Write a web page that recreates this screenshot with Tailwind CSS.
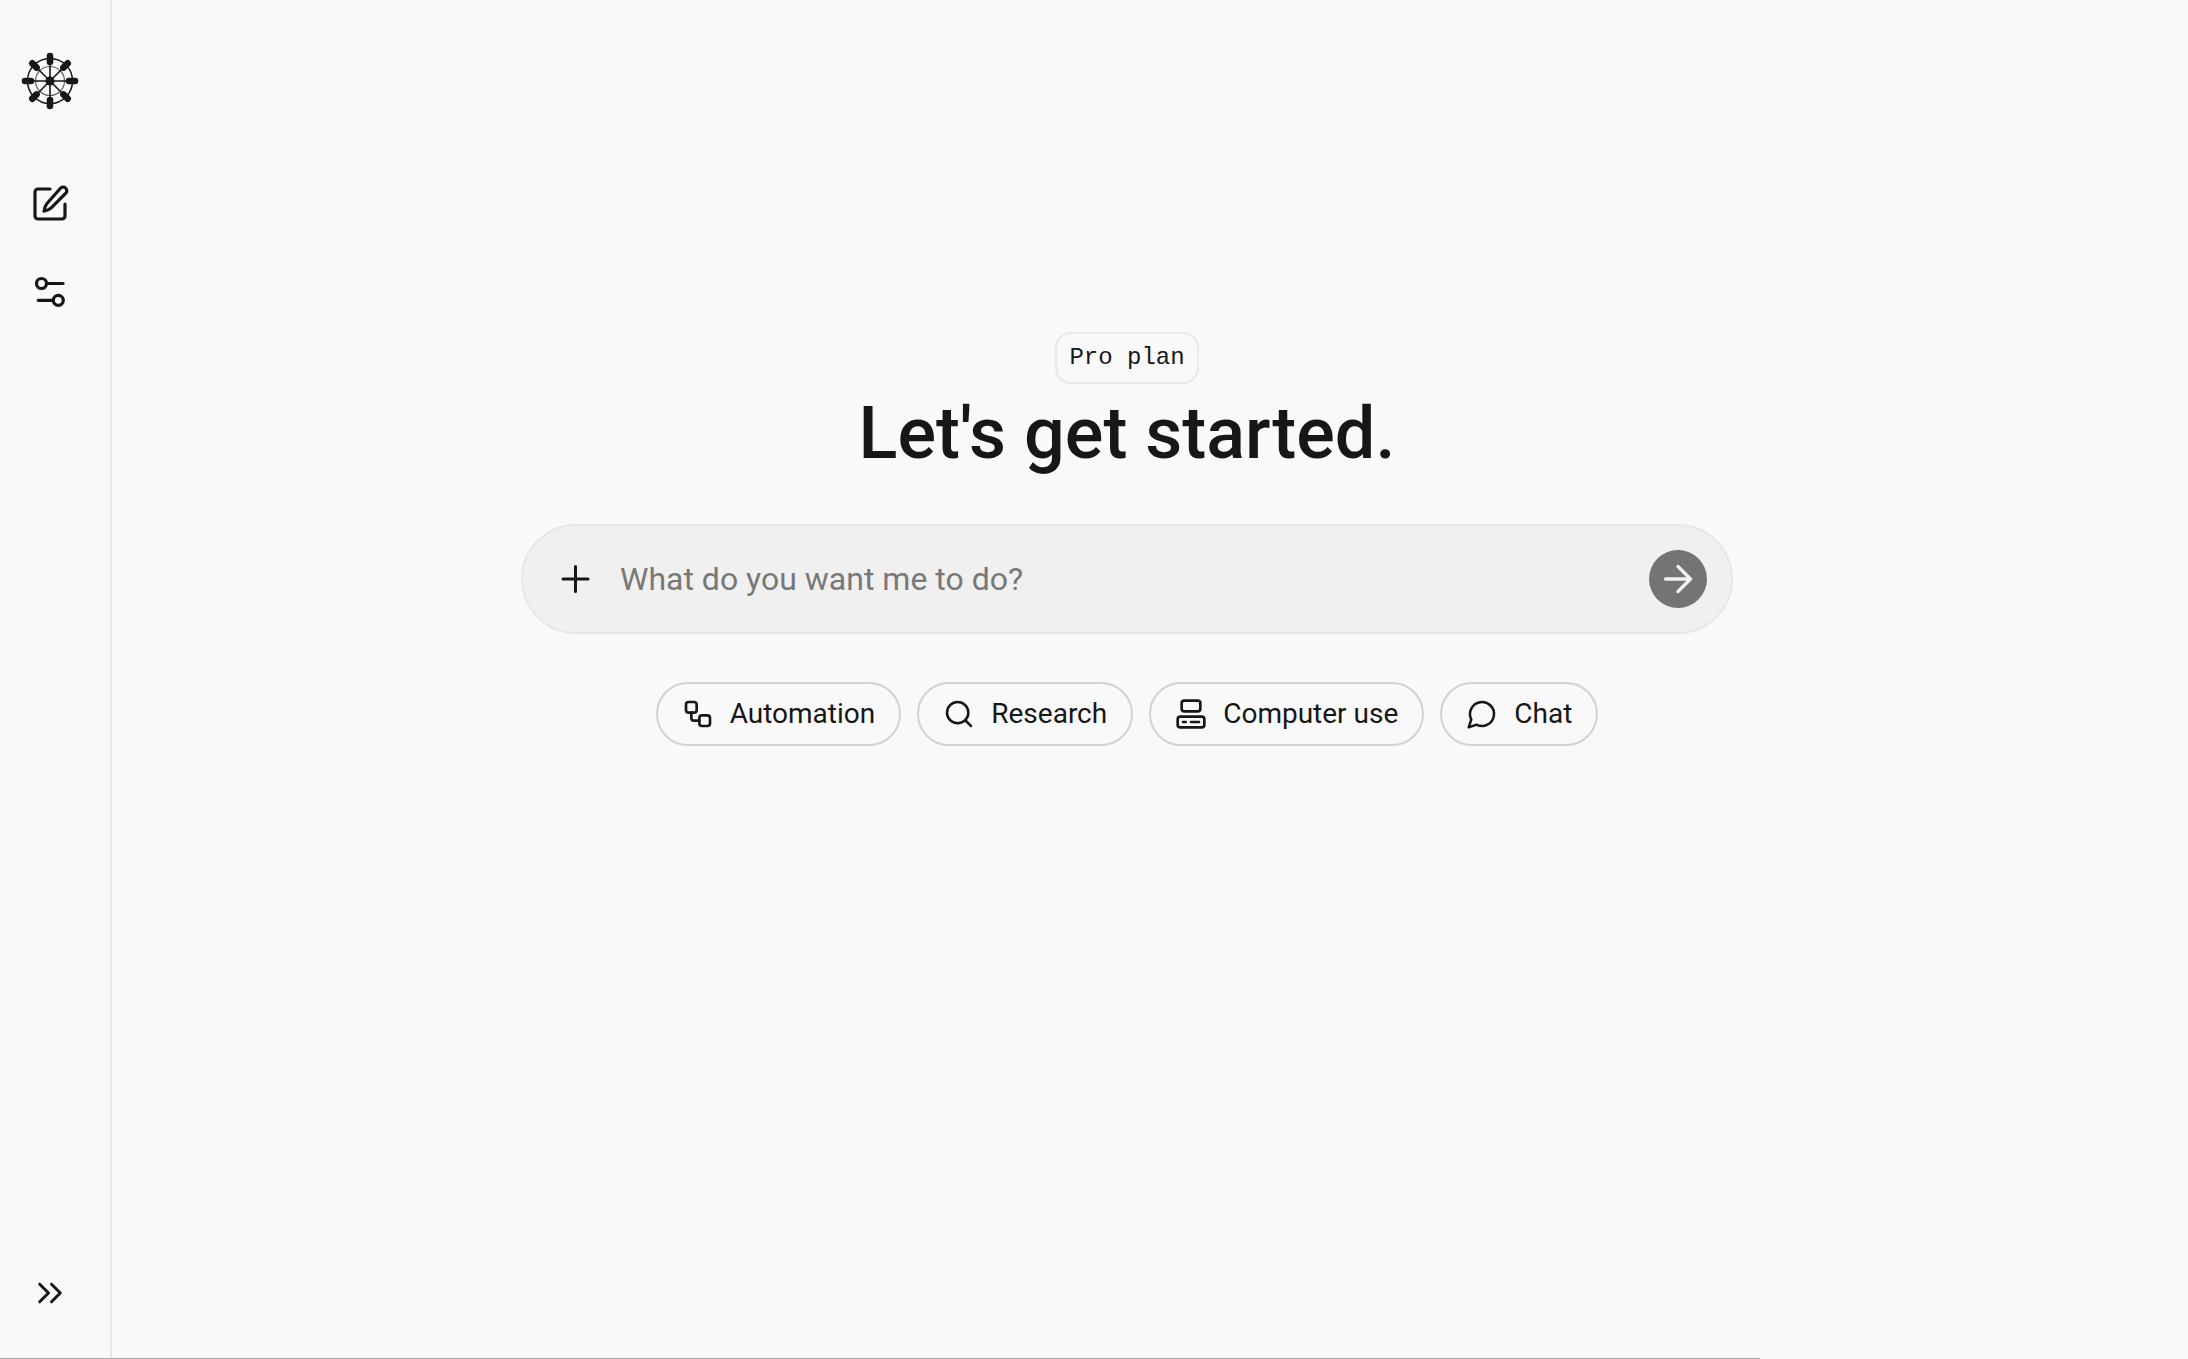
<!DOCTYPE html>
<html lang="en">
<head>
<meta charset="utf-8">
<meta name="viewport" content="width=device-width, initial-scale=1">
<title>Let's get started</title>
<script src="https://cdn.jsdelivr.net/npm/@tailwindcss/browser@4"></script>
</head>
<body class="flex min-h-screen flex-col bg-[#f9f9f9] font-['Roboto',sans-serif] text-[#171717]">
<div class="flex grow">
  <aside class="flex w-28 shrink-0 flex-col items-center border-r-2 border-[#e9e9e9] pt-[51px] pr-[10px] pb-[45px]">
    <a href="#" aria-label="Home" class="block">
      <svg class="size-[60px]" viewBox="-30 -30 60 60" fill="none" stroke="currentColor" stroke-linecap="round">
        <circle r="22.5" stroke-width="1.5"/>
        <circle r="14.5" stroke-width="1.2" stroke="#666"/>
        <path stroke-width="1.6" d="M0-22V22M-22 0H22M-16-16 16 16M16-16-16 16"/>
        <circle r="4.5" fill="currentColor" stroke="none"/>
        <path stroke-width="6.6" d="M0-25V-19M0 25V19M-25 0H-19M25 0H19M-17.7-17.7-13.4-13.4M17.7 17.7 13.4 13.4M-17.7 17.7-13.4 13.4M17.7-17.7 13.4-13.4"/>
      </svg>
    </a>
    <nav class="mt-[73px] flex flex-col gap-12" aria-label="Main">
      <button type="button" aria-label="New task" class="block">
        <svg class="size-10" viewBox="0 0 40 40" fill="none" stroke="currentColor" stroke-width="3.2" stroke-linecap="round" stroke-linejoin="round">
          <path d="M20 5H8a3 3 0 0 0-3 3v24a3 3 0 0 0 3 3h24a3 3 0 0 0 3-3V20"/>
          <path d="M30.5 4.2a3.6 3.6 0 0 1 5.300 5L21.500 23.700q-2.800 2.800-7.500 3.500.5-5 3.200-8z"/>
        </svg>
      </button>
      <button type="button" aria-label="Settings" class="block">
        <svg class="size-10" viewBox="0 0 40 40" fill="none" stroke="currentColor" stroke-width="3.2" stroke-linecap="round">
          <circle cx="11.5" cy="11.5" r="5"/><path d="M17 11.500h16"/>
          <circle cx="28.300" cy="28.300" r="5"/><path d="M22.500 28.300H8.300"/>
        </svg>
      </button>
    </nav>
    <button type="button" aria-label="Expand sidebar" class="mt-auto block">
      <svg class="size-10" viewBox="0 0 40 40" fill="none" stroke="currentColor" stroke-width="3" stroke-linecap="round" stroke-linejoin="round">
        <path d="m9.700 11.200 8.800 8.800-8.800 8.800M21.500 11.200l8.800 8.800-8.800 8.800"/>
      </svg>
    </button>
  </aside>

  <main class="flex min-w-0 grow flex-col items-center pt-[332px] pr-[46px]">
    <span class="flex h-13 items-center rounded-2xl border-2 border-[#e9e9e9] px-3 font-['Liberation_Mono',monospace] text-2xl">Pro plan</span>
    <h1 class="text-7xl leading-[100px] font-medium">Let's get started.</h1>

    <form class="mt-10 flex h-[110px] w-full max-w-[1212px] items-center rounded-full border-2 border-[#e7e7e7] bg-[#f0f0f0] pr-6 pl-8">
      <button type="button" aria-label="Add attachment" class="shrink-0">
        <svg class="block size-10" viewBox="0 0 40 40" fill="none" stroke="currentColor" stroke-width="3" stroke-linecap="round">
          <path d="M20.500 7.500v25M8 20h25"/>
        </svg>
      </button>
      <input type="text" aria-label="Task" placeholder="What do you want me to do?" class="ml-[25px] min-w-0 grow bg-transparent text-[32px] leading-10 outline-none placeholder:text-[#787878]">
      <button type="submit" aria-label="Send" class="flex size-[58px] shrink-0 items-center justify-center rounded-full bg-[#747474] text-[#f0f0f0]">
        <svg class="size-10" viewBox="0 0 40 40" fill="none" stroke="currentColor" stroke-width="3.300" stroke-linecap="round" stroke-linejoin="round">
          <path d="M7.500 20h25M20 7.500 32.500 20 20 32.500"/>
        </svg>
      </button>
    </form>

    <div class="mt-12 flex flex-wrap justify-center gap-4 text-[28px]">
      <button type="button" class="flex h-16 items-center gap-4 rounded-full border-2 border-[#d2d2d2] px-6">
        <svg class="size-8" viewBox="0 0 24 24" fill="none" stroke="currentColor" stroke-width="2" stroke-linecap="round" stroke-linejoin="round">
          <rect x="3" y="3" width="8" height="8" rx="2"/><path d="M7 11v4a2 2 0 0 0 2 2h4"/><rect x="13" y="13" width="8" height="8" rx="2"/>
        </svg>
        Automation
      </button>
      <button type="button" class="flex h-16 items-center gap-4 rounded-full border-2 border-[#d2d2d2] px-6">
        <svg class="size-8" viewBox="0 0 24 24" fill="none" stroke="currentColor" stroke-width="1.900" stroke-linecap="round" stroke-linejoin="round">
          <circle cx="11" cy="11" r="8"/><path d="m21 21-4.300-4.300"/>
        </svg>
        Research
      </button>
      <button type="button" class="flex h-16 items-center gap-4 rounded-full border-2 border-[#d2d2d2] px-6">
        <svg class="size-8" viewBox="0 0 24 24" fill="none" stroke="currentColor" stroke-width="2" stroke-linecap="round" stroke-linejoin="round">
          <rect x="5" y="2" width="14" height="8" rx="2"/><rect x="2" y="14" width="20" height="8" rx="2"/><path d="M6 18h2M12 18h6"/>
        </svg>
        Computer use
      </button>
      <button type="button" class="flex h-16 items-center gap-4 rounded-full border-2 border-[#d2d2d2] px-6">
        <svg class="size-8" viewBox="0 0 24 24" fill="none" stroke="currentColor" stroke-width="1.900" stroke-linecap="round" stroke-linejoin="round">
          <path d="M7.900 20A9 9 0 1 0 4 16.100L2 22Z"/>
        </svg>
        Chat
      </button>
    </div>
  </main>
</div>
<div class="h-px w-[80.45%] bg-[#aaa]"></div>
</body>
</html>
